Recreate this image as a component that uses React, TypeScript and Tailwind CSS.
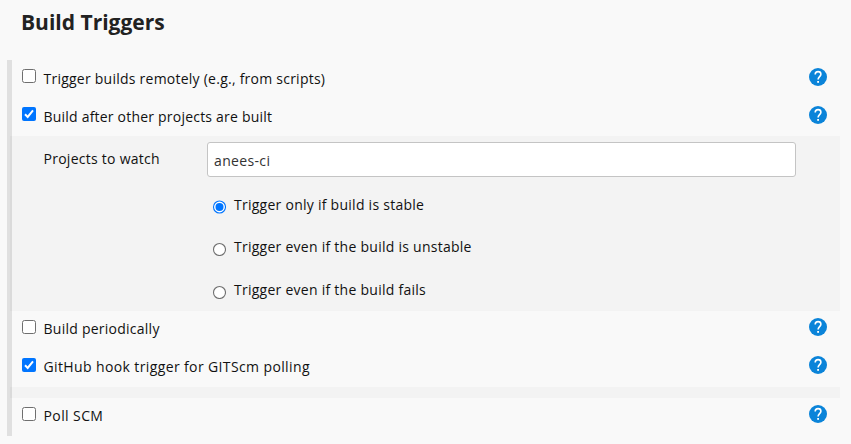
import type { ReactNode } from "react";

function CheckBox({ checked }: { checked?: boolean }) {
  return (
    <svg role="checkbox" aria-checked={!!checked} className="mt-[9px] size-[14px] shrink-0" viewBox="0 0 14 14">
      {checked ? (
        <>
          <rect width="14" height="14" rx="2" fill="#0075ff" />
          <path d="M3 7.3 5.7 10 11 3.4" fill="none" stroke="#fff" strokeWidth="2" />
        </>
      ) : (
        <rect x="0.5" y="0.5" width="13" height="13" rx="2" fill="#fff" stroke="#6f6f6f" />
      )}
    </svg>
  );
}

function Radio({ checked }: { checked?: boolean }) {
  return (
    <svg role="radio" aria-checked={!!checked} className="mt-[5px] size-[14px] shrink-0" viewBox="0 0 14 14">
      <circle cx="7.5" cy={checked ? 7 : 7.5} r="6" fill="#fff" stroke={checked ? "#0075ff" : "#6f6f6f"} strokeWidth="1.1" />
      {checked && <circle cx="7.5" cy="7" r="4" fill="#0075ff" />}
    </svg>
  );
}

function Help({ className }: { className: string }) {
  return (
    <svg className={`mr-[13px] ml-auto size-[18px] shrink-0 ${className}`} viewBox="0 0 18 18">
      <circle cx="9" cy="9" r="9" fill="#0b84d9" />
      <path
        d="M6.2 6.5C6.2 4.5 7.5 3.6 9.1 3.6s2.8 1 2.8 2.6c0 2.2-2.8 2.6-2.8 5.2"
        fill="none"
        stroke="#fff"
        strokeWidth="1.6"
      />
      <rect x="8.2" y="13" width="1.8" height="1.8" fill="#fff" />
    </svg>
  );
}

type RowProps = { checked?: boolean; labelClass?: string; helpClass?: string; children: ReactNode };

function Row({ checked, labelClass = "mt-[9px] tracking-[0.24px]", helpClass = "mt-[8px]", children }: RowProps) {
  return (
    <div className="flex h-[38px] items-start pl-[10px]">
      <CheckBox checked={checked} />
      <span className={`ml-[7.5px] leading-5 whitespace-nowrap ${labelClass}`}>{children}</span>
      <Help className={helpClass} />
    </div>
  );
}

function Option({ checked, children }: { checked?: boolean; children: ReactNode }) {
  return (
    <div className="flex items-start">
      <Radio checked={checked} />
      <span className="ml-2 leading-5 tracking-[0.26px] whitespace-nowrap">{children}</span>
    </div>
  );
}

export default function App() {
  return (
    <main className="h-[444px] w-[851px] overflow-hidden bg-[#f9f9f9] font-['Open_Sans','Noto_Sans',sans-serif] text-[14px] text-[#111]">
      <h1 className="h-[60px] pt-[8px] pl-[21px] text-[21px] leading-7 font-bold text-[#222]">Build Triggers</h1>
      <section className="ml-[7px] w-[833px] border-l-[5px] border-[#e0e0e0]">
        <Row>Trigger builds remotely (e.g., from scripts)</Row>
        <Row checked labelClass="mt-[9px] tracking-[0.21px]">Build after other projects are built</Row>
        <div className="-ml-[2px] flex h-[175px] bg-black/[0.024] pl-[33.5px]">
          <span className="mt-[13px] w-[163.5px] shrink-0 leading-5 tracking-[0.26px]">Projects to watch</span>
          <div className="pt-[6px]">
            <div className="flex h-[35px] w-[589px] items-center rounded-[3px] border border-[#c4c4c4] bg-white pt-[2px] pl-[6px] tracking-[0.35px] text-[#333]">
              anees-ci
            </div>
            <div className="mt-[18px] flex flex-col gap-[22.4px] pl-[5px]">
              <Option checked>Trigger only if build is stable</Option>
              <Option>Trigger even if the build is unstable</Option>
              <Option>Trigger even if the build fails</Option>
            </div>
          </div>
        </div>
        <Row labelClass="mt-[8px] tracking-[0.25px]" helpClass="mt-[7px]">Build periodically</Row>
        <Row checked labelClass="mt-[8px] tracking-[0.38px]" helpClass="mt-[7px]">GitHub hook trigger for GITScm polling</Row>
        <div className="-ml-[2px] h-[11px] bg-black/[0.024]" />
        <Row labelClass="mt-[8px] tracking-[0.4px]" helpClass="mt-[7px]">Poll SCM</Row>
      </section>
    </main>
  );
}
